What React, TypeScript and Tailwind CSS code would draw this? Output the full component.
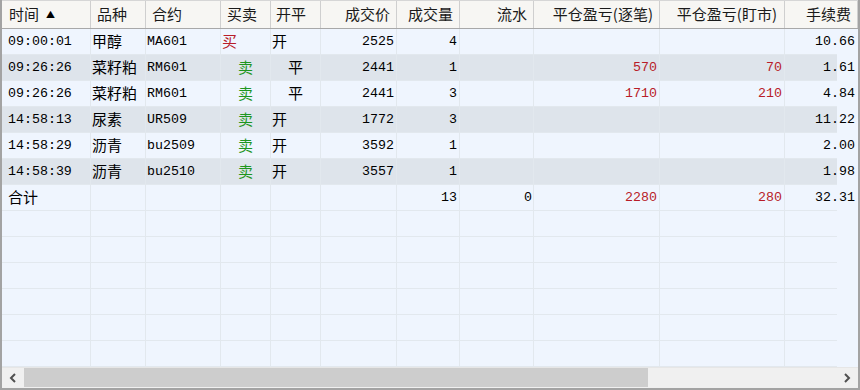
import React from "react";

type Row = {
  t: string; p: string; c: string; bs: string; bsLeft: boolean; oc: string; ocLeft: boolean;
  price: string; qty: string; flow: string; pl1: string; pl2: string; fee: string;
};

const rows: Row[] = [
  { t: "09:00:01", p: "甲醇", c: "MA601", bs: "买", bsLeft: true, oc: "开", ocLeft: true, price: "2525", qty: "4", flow: "", pl1: "", pl2: "", fee: "10.66" },
  { t: "09:26:26", p: "菜籽粕", c: "RM601", bs: "卖", bsLeft: false, oc: "平", ocLeft: false, price: "2441", qty: "1", flow: "", pl1: "570", pl2: "70", fee: "1.61" },
  { t: "09:26:26", p: "菜籽粕", c: "RM601", bs: "卖", bsLeft: false, oc: "平", ocLeft: false, price: "2441", qty: "3", flow: "", pl1: "1710", pl2: "210", fee: "4.84" },
  { t: "14:58:13", p: "尿素", c: "UR509", bs: "卖", bsLeft: false, oc: "开", ocLeft: true, price: "1772", qty: "3", flow: "", pl1: "", pl2: "", fee: "11.22" },
  { t: "14:58:29", p: "沥青", c: "bu2509", bs: "卖", bsLeft: false, oc: "开", ocLeft: true, price: "3592", qty: "1", flow: "", pl1: "", pl2: "", fee: "2.00" },
  { t: "14:58:39", p: "沥青", c: "bu2510", bs: "卖", bsLeft: false, oc: "开", ocLeft: true, price: "3557", qty: "1", flow: "", pl1: "", pl2: "", fee: "1.98" },
];

const cjk = "font-['Noto_Sans_CJK_SC',sans-serif] text-[15px]";
const mono = "font-['Liberation_Mono','Noto_Sans_CJK_SC',monospace] text-[13.3px]";
const cell = "h-full shrink-0 flex items-center border-r border-[#e2e8ee] whitespace-nowrap";
const red = "text-[#b81c28]";
const green = "text-[#1e961e]";

function Header() {
  const h = "h-full shrink-0 flex items-center border-r border-[#cfcfcf] whitespace-nowrap text-[#1a1a1a]";
  return (
    <div className={`flex h-[29px] w-[856px] bg-[#f7f6f3] border-t border-t-[#d6d6d6] border-b border-b-[#a8a8a8] ${cjk}`}>
      <div className={`${h} w-[89px] pl-[7px] gap-[7px]`}>时间<span className="text-[9px] text-black">▲</span></div>
      <div className={`${h} w-[55px] pl-[6px]`}>品种</div>
      <div className={`${h} w-[75px] pl-[6px]`}>合约</div>
      <div className={`${h} w-[50px] pl-[6px]`}>买卖</div>
      <div className={`${h} w-[50px] pl-[5px]`}>开平</div>
      <div className={`${h} w-[76px] justify-end pr-[6px]`}>成交价</div>
      <div className={`${h} w-[63px] justify-end pr-[6px]`}>成交量</div>
      <div className={`${h} w-[74px] justify-end pr-[6px]`}>流水</div>
      <div className={`${h} w-[126px] justify-end pr-[6px]`}>平仓盈亏(逐笔)</div>
      <div className={`${h} w-[125px] justify-end pr-[7px]`}>平仓盈亏(盯市)</div>
      <div className={`${h} w-[73px] justify-end pr-[6px]`}>手续费</div>
    </div>
  );
}

function DataRow({ r, gray }: { r: Row; gray: boolean }) {
  return (
    <div className={`flex h-[26px] w-[835px] border-b border-[#e2e8ee] text-black ${gray ? "bg-[#dee4eb]" : "bg-[#eff5fe]"}`}>
      <div className={`${cell} w-[89px] pl-[6px] ${mono}`}>{r.t}</div>
      <div className={`${cell} w-[55px] pl-[1px] ${cjk}`}>{r.p}</div>
      <div className={`${cell} w-[75px] pl-[1px] ${mono}`}>{r.c}</div>
      <div className={`${cell} w-[50px] ${r.bsLeft ? "pl-[1px]" : "justify-center"} ${cjk} ${r.bs === "买" ? red : green}`}>{r.bs}</div>
      <div className={`${cell} w-[50px] ${r.ocLeft ? "pl-[1px]" : "justify-center"} ${cjk}`}>{r.oc}</div>
      <div className={`${cell} w-[76px] justify-end pr-[2px] ${mono}`}>{r.price}</div>
      <div className={`${cell} w-[63px] justify-end pr-[2px] ${mono}`}>{r.qty}</div>
      <div className={`${cell} w-[74px] justify-end pr-[1px] ${mono}`}>{r.flow}</div>
      <div className={`${cell} w-[126px] justify-end pr-[2px] ${mono} ${red}`}>{r.pl1}</div>
      <div className={`${cell} w-[125px] justify-end pr-[2px] ${mono} ${red}`}>{r.pl2}</div>
      <div className={`h-full shrink-0 flex items-center whitespace-nowrap w-[73px] justify-end pr-[3px] ${mono}`}>{r.fee}</div>
    </div>
  );
}

function TotalRow() {
  return (
    <div className="flex h-[26px] w-[835px] border-b border-[#e2e8ee] bg-[#eff5fe] text-black">
      <div className={`${cell} w-[89px] pl-[6px] ${cjk}`}>合计</div>
      <div className={`${cell} w-[55px]`} />
      <div className={`${cell} w-[75px]`} />
      <div className={`${cell} w-[50px]`} />
      <div className={`${cell} w-[50px]`} />
      <div className={`${cell} w-[76px]`} />
      <div className={`${cell} w-[63px] justify-end pr-[2px] ${mono}`}>13</div>
      <div className={`${cell} w-[74px] justify-end pr-[1px] ${mono}`}>0</div>
      <div className={`${cell} w-[126px] justify-end pr-[2px] ${mono} ${red}`}>2280</div>
      <div className={`${cell} w-[125px] justify-end pr-[2px] ${mono} ${red}`}>280</div>
      <div className={`h-full shrink-0 flex items-center whitespace-nowrap w-[73px] justify-end pr-[3px] ${mono}`}>32.31</div>
    </div>
  );
}

function EmptyRow() {
  return (
    <div className="flex h-[26px] w-[835px] border-b border-[#e2e8ee] bg-[#eff5fe]">
      <div className={`${cell} w-[89px]`} />
      <div className={`${cell} w-[55px]`} />
      <div className={`${cell} w-[75px]`} />
      <div className={`${cell} w-[50px]`} />
      <div className={`${cell} w-[50px]`} />
      <div className={`${cell} w-[76px]`} />
      <div className={`${cell} w-[63px]`} />
      <div className={`${cell} w-[74px]`} />
      <div className={`${cell} w-[126px]`} />
      <div className={`${cell} w-[125px]`} />
    </div>
  );
}

function Scrollbar() {
  return (
    <div className="flex h-[21px] w-[856px] bg-[#f0f0f0] border-t border-[#e6e6e6]">
      <div className="w-[22px] h-full flex items-center justify-center shrink-0">
        <svg width="8" height="10" viewBox="0 0 8 10">
          <path d="M6 1 L2 5 L6 9" stroke="#505050" strokeWidth="2" fill="none" />
        </svg>
      </div>
      <div className="w-[624px] h-[19px] bg-[#cdcdcd] shrink-0" />
      <div className="flex-1" />
      <div className="w-[22px] h-full flex items-center justify-center shrink-0">
        <svg width="8" height="10" viewBox="0 0 8 10">
          <path d="M2 1 L6 5 L2 9" stroke="#505050" strokeWidth="2" fill="none" />
        </svg>
      </div>
    </div>
  );
}

export default function App() {
  return (
    <div className="w-[860px] h-[390px] overflow-hidden bg-white">
      <div className="w-[860px] h-[390px] border-l-2 border-r-2 border-b-2 border-[#a3a3a3] bg-[#eff5fe] flex flex-col">
        <Header />
        <div className="flex-1 flex flex-col overflow-hidden">
          {rows.map((r, i) => (
            <DataRow key={i} r={r} gray={i % 2 === 1} />
          ))}
          <TotalRow />
          {Array.from({ length: 6 }).map((_, i) => (
            <EmptyRow key={i} />
          ))}
        </div>
        <Scrollbar />
      </div>
    </div>
  );
}
